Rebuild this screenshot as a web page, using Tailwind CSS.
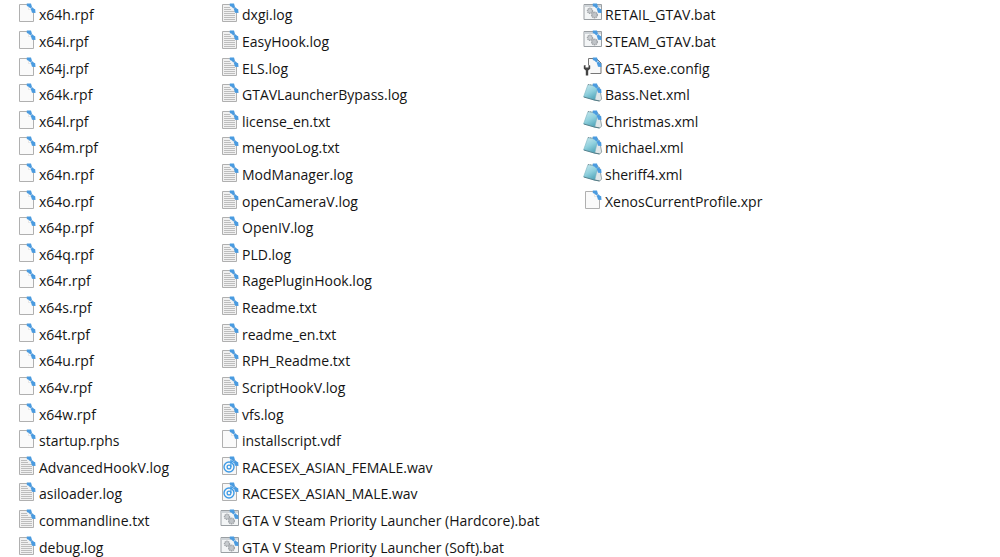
<!DOCTYPE html>
<html lang="en">
<head>
<meta charset="utf-8">
<title>Files</title>
<script src="https://cdn.jsdelivr.net/npm/@tailwindcss/browser@4"></script>
</head>
<body class="bg-white overflow-hidden">
<svg class="absolute size-0" aria-hidden="true">
  <defs>
    <linearGradient id="teal" x1="0.200" y1="0" x2="0.700" y2="1"><stop offset="0" stop-color="#c5e6ec"/><stop offset=".5" stop-color="#8fd0dd"/><stop offset="1" stop-color="#4fa3b8"/></linearGradient>
    <symbol id="mark" viewBox="0 0 20 20">
      <path d="M9.800.5 14 .5l1 3.600-1.700 1.300-1.600-1.700-1.900-.7z" fill="#4a9be0"/>
      <path d="m13.700 5.700 1.900-1.400 1.300 1.400 1.300.5.300 3.700-3.500-.2-.6-2z" fill="#4a9be0"/>
    </symbol>
    <symbol id="page" viewBox="0 0 20 20">
      <path d="M2.500 1.500h9l5 5v12h-14z" fill="#fafafa" stroke="#b0b0b0"/>
      <path d="M11.500 1.500v5h5" fill="#fff" stroke="#dcdcdc" stroke-width=".7"/>
      <use href="#mark"/>
    </symbol>
    <symbol id="text" viewBox="0 0 20 20">
      <path d="M2.500 1.500h9l5 5v12h-14z" fill="#f1f1f1" stroke="#b0b0b0"/>
      <path d="M4 4.500h6M4 6.500h7M4 8.500h11M4 10.500h11M4 12.500h11M4 14.500h11M4 16.500h11" stroke="#bdbdbd"/>
      <use href="#mark"/>
    </symbol>
    <symbol id="audio" viewBox="0 0 20 20">
      <path d="M2.500 1.500h9l5 5v12h-14z" fill="#f7f7f7" stroke="#b0b0b0"/>
      <circle cx="9" cy="11" r="5" fill="none" stroke="#3f9be6" stroke-width="1.400"/>
      <circle cx="9" cy="11" r="1.900" fill="none" stroke="#3f9be6" stroke-width="1.300"/>
      <path d="M10.900 11V4.500l3 2" fill="none" stroke="#3f9be6" stroke-width="1.200"/>
      <use href="#mark"/>
    </symbol>
    <symbol id="batch" viewBox="0 0 20 20">
      <path d="M1 1.500h17.500v15H1z" fill="#f3f5f6" stroke="#9a9fa3"/>
      <path d="M1.500 3h16.500" stroke="#cfd4d8" stroke-width="2"/>
      <circle cx="7" cy="7.800" r="2.500" fill="#c8cccf" stroke="#a0a4a8" stroke-width="1.400" stroke-dasharray="1.300 .5"/>
      <circle cx="11.500" cy="12" r="2.800" fill="#c0c4c8" stroke="#a0a4a8" stroke-width="1.400" stroke-dasharray="1.300 .5"/>
      <use href="#mark"/>
    </symbol>
    <symbol id="config" viewBox="0 0 20 20">
      <path d="M5.500 8V1.500h8L18 6v10.500H7.500" fill="#f8f8f8" stroke="#777"/>
      <path d="M.8 8.500v3.200l2 1.700v5.100h2.400v-5.100l2-1.700V8.500L5.500 8v2.500h-3V8z" fill="#444"/>
      <use href="#mark"/>
    </symbol>
    <symbol id="xml" viewBox="0 0 20 20">
      <path d="m14 3.500 2.500 1 2.200 11.500-2 2-6-1.300z" fill="#dfe6e8" stroke="#7f9096" stroke-width=".8"/>
      <path d="M5 1.500 15 3l-3.200 14L.6 13.800z" fill="url(#teal)" stroke="#79b3c1" stroke-width=".6"/>
      <path d="M.8 14 11.800 17.200l4.700.8" fill="none" stroke="#41707c" stroke-width=".8"/>
      <path d="M5 1.500 15 3" stroke="#83979d" stroke-width="1.200" stroke-dasharray="1 .8"/>
      <use href="#mark"/>
    </symbol>
  </defs>
</svg>
<main>
  <ul id="files" class="grid h-[560px] grid-flow-col grid-rows-21 grid-cols-[203px_363px_1fr] pl-[17px] pt-px font-['Open_Sans','Noto_Sans',sans-serif] text-[14px] leading-5 text-[#141414]"></ul>
</main>
<template id="row">
  <li class="flex min-h-0 items-center gap-0.5 whitespace-nowrap">
    <svg class="mb-0.5 size-5 shrink-0" aria-hidden="true"><use/></svg>
    <span class="pt-0.5"></span>
  </li>
</template>
<script>
  const groups = [
    ['page', 'x64h.rpf x64i.rpf x64j.rpf x64k.rpf x64l.rpf x64m.rpf x64n.rpf x64o.rpf x64p.rpf x64q.rpf x64r.rpf x64s.rpf x64t.rpf x64u.rpf x64v.rpf x64w.rpf startup.rphs'.split(' ')],
    ['text', 'AdvancedHookV.log asiloader.log commandline.txt debug.log dxgi.log EasyHook.log ELS.log GTAVLauncherBypass.log license_en.txt menyooLog.txt ModManager.log openCameraV.log OpenIV.log PLD.log RagePluginHook.log Readme.txt readme_en.txt RPH_Readme.txt ScriptHookV.log vfs.log'.split(' ')],
    ['page', ['installscript.vdf']],
    ['audio', ['RACESEX_ASIAN_FEMALE.wav', 'RACESEX_ASIAN_MALE.wav']],
    ['batch', ['GTA V Steam Priority Launcher (Hardcore).bat', 'GTA V Steam Priority Launcher (Soft).bat', 'RETAIL_GTAV.bat', 'STEAM_GTAV.bat']],
    ['config', ['GTA5.exe.config']],
    ['xml', ['Bass.Net.xml', 'Christmas.xml', 'michael.xml', 'sheriff4.xml']],
    ['page', ['XenosCurrentProfile.xpr']],
  ];
  const list = document.getElementById('files');
  const row = document.getElementById('row');
  for (const [icon, names] of groups) {
    for (const name of names) {
      const item = row.content.cloneNode(true);
      item.querySelector('use').setAttribute('href', '#' + icon);
      item.querySelector('span').textContent = name;
      list.append(item);
    }
  }
</script>
</body>
</html>
